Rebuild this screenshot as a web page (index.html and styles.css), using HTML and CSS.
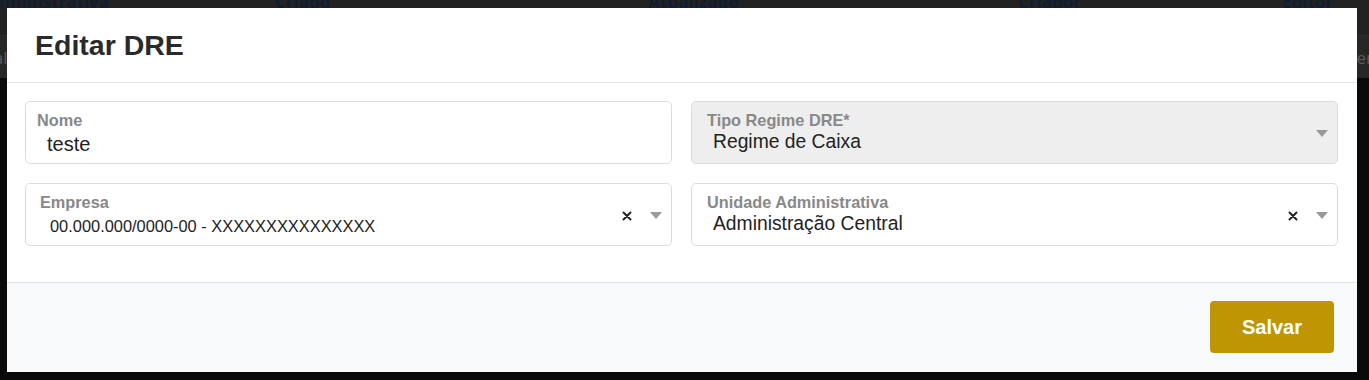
FILE: index.html
```html
<!DOCTYPE html>
<html lang="pt-BR">
<head>
    <meta charset="UTF-8">
    <meta name="viewport" content="width=device-width, initial-scale=1.0">
    <title>Editar DRE</title>
    <link rel="stylesheet" href="styles.css">
</head>
<body>
    <!-- página por trás do modal -->
    <div class="page">
        <div class="thead">
            <span class="th th-unidade">Administrativa</span>
            <span class="th th-criado">Criado</span>
            <span class="th th-atualizado">Atualizado</span>
            <span class="th th-criador">Criador</span>
            <span class="th th-editor">Editor</span>
        </div>
        <div class="trow">
            <span class="td td-first">Central</span>
            <span class="td td-last">Ver</span>
        </div>
    </div>

    <div class="modal">
        <header class="modal-header">
            <h1>Editar DRE</h1>
        </header>

        <div class="modal-body">
            <div class="field">
                <label class="field-label label-input">Nome</label>
                <div class="field-value value-input">teste</div>
            </div>

            <div class="field select disabled">
                <div class="select-text">
                    <label class="field-label">Tipo Regime DRE*</label>
                    <div class="field-value">Regime de Caixa</div>
                </div>
                <div class="select-icons">
                    <span class="arrow"></span>
                </div>
            </div>

            <div class="field select">
                <div class="select-text">
                    <label class="field-label label-empresa">Empresa</label>
                    <div class="field-value value-empresa">00.000.000/0000-00 - XXXXXXXXXXXXXXX</div>
                </div>
                <div class="select-icons">
                    <svg class="clear" width="10" height="10" viewBox="0 0 10 10">
                        <path d="M1.5 1.5 L8.5 8.5 M8.5 1.5 L1.5 8.5" stroke="#222" stroke-width="2" stroke-linecap="round"/>
                    </svg>
                    <span class="arrow"></span>
                </div>
            </div>

            <div class="field select">
                <div class="select-text">
                    <label class="field-label">Unidade Administrativa</label>
                    <div class="field-value">Administração Central</div>
                </div>
                <div class="select-icons">
                    <svg class="clear" width="10" height="10" viewBox="0 0 10 10">
                        <path d="M1.5 1.5 L8.5 8.5 M8.5 1.5 L1.5 8.5" stroke="#222" stroke-width="2" stroke-linecap="round"/>
                    </svg>
                    <span class="arrow"></span>
                </div>
            </div>
        </div>

        <footer class="modal-footer">
            <button class="btn-salvar">Salvar</button>
        </footer>
    </div>
</body>
</html>
```

FILE: styles.css
```css
* {
    margin: 0;
    padding: 0;
    box-sizing: border-box;
}

body {
    font-family: 'Liberation Sans', Arial, sans-serif;
    background: #0a0a0a;
    width: 1369px;
    height: 380px;
    overflow: hidden;
    position: relative;
}

/* página escurecida */
.page {
    font-family: 'Open Sans', sans-serif;
}

.thead {
    height: 35px;
    background: #222222;
    display: flex;
    align-items: flex-end;
    overflow: hidden;
}

.th {
    font-weight: 700;
    font-size: 17px;
    color: #101d30;
    line-height: 20px;
    margin-bottom: 23px;
    white-space: nowrap;
}

.th-unidade { margin-left: -18px; width: 293px; }
.th-criado { width: 373px; }
.th-atualizado { width: 370px; }
.th-criador { width: 264px; }

.trow {
    height: 43px;
    background: #272727;
    border-top: 1px solid #2e2e2e;
    display: flex;
    justify-content: space-between;
    align-items: center;
    color: #5a5a5a;
    font-size: 17px;
    overflow: hidden;
}

.td-first { margin-left: -50px; }
.td-last { margin-right: -4px; }

/* modal */
.modal {
    position: absolute;
    top: 8px;
    left: 7px;
    width: 1350px;
    height: 364px;
    background: #fff;
    display: flex;
    flex-direction: column;
}

.modal-header {
    padding: 20px 28px;
    border-bottom: 1px solid #dee2e6;
}

.modal-header h1 {
    font-size: 28.5px;
    line-height: 34px;
    font-weight: 700;
    color: #2a2a2a;
}

.modal-body {
    display: grid;
    grid-template-columns: 1fr 1fr;
    column-gap: 19px;
    row-gap: 19px;
    padding: 18px 19px 36px 18px;
}

.field {
    height: 63px;
    border: 1px solid #dcdcdc;
    border-radius: 5px;
    padding: 9px 0 8px;
    background: #fff;
}

.field.disabled {
    background: #eeeeee;
}

.field-label {
    display: block;
    font-size: 16.3px;
    line-height: 18px;
    font-weight: 700;
    color: #888888;
    padding-left: 15px;
}

.field-value {
    font-size: 19.3px;
    line-height: 22px;
    color: #222;
    margin-top: 2px;
    padding-left: 21px;
}

.label-input { padding-left: 11px; }
.value-input { padding-left: 21px; margin-top: 4px; font-size: 20px; }
.label-empresa { padding-left: 14px; }
.value-empresa { font-size: 16.4px; padding-left: 24px; margin-top: 4px; }

.select {
    display: flex;
    align-items: center;
}

.select-text {
    flex: 1;
    align-self: flex-start;
}

.select-icons {
    display: flex;
    align-items: center;
    gap: 18px;
    padding-right: 9px;
}

.clear {
    margin-top: 1px;
}

.arrow {
    width: 0;
    height: 0;
    border-left: 6px solid transparent;
    border-right: 6px solid transparent;
    border-top: 7px solid #999;
}

/* rodapé */
.modal-footer {
    flex: 1;
    background: #f8f9fa;
    border-top: 1px solid #dee2e6;
    display: flex;
    justify-content: flex-end;
    align-items: flex-start;
    padding: 18px 23px 19px;
}

.btn-salvar {
    width: 124px;
    height: 52px;
    background: #bf9504;
    color: #fff;
    border: none;
    border-radius: 4px;
    font-family: 'Liberation Sans', Arial, sans-serif;
    font-size: 20px;
    font-weight: 700;
    cursor: pointer;
}
```
